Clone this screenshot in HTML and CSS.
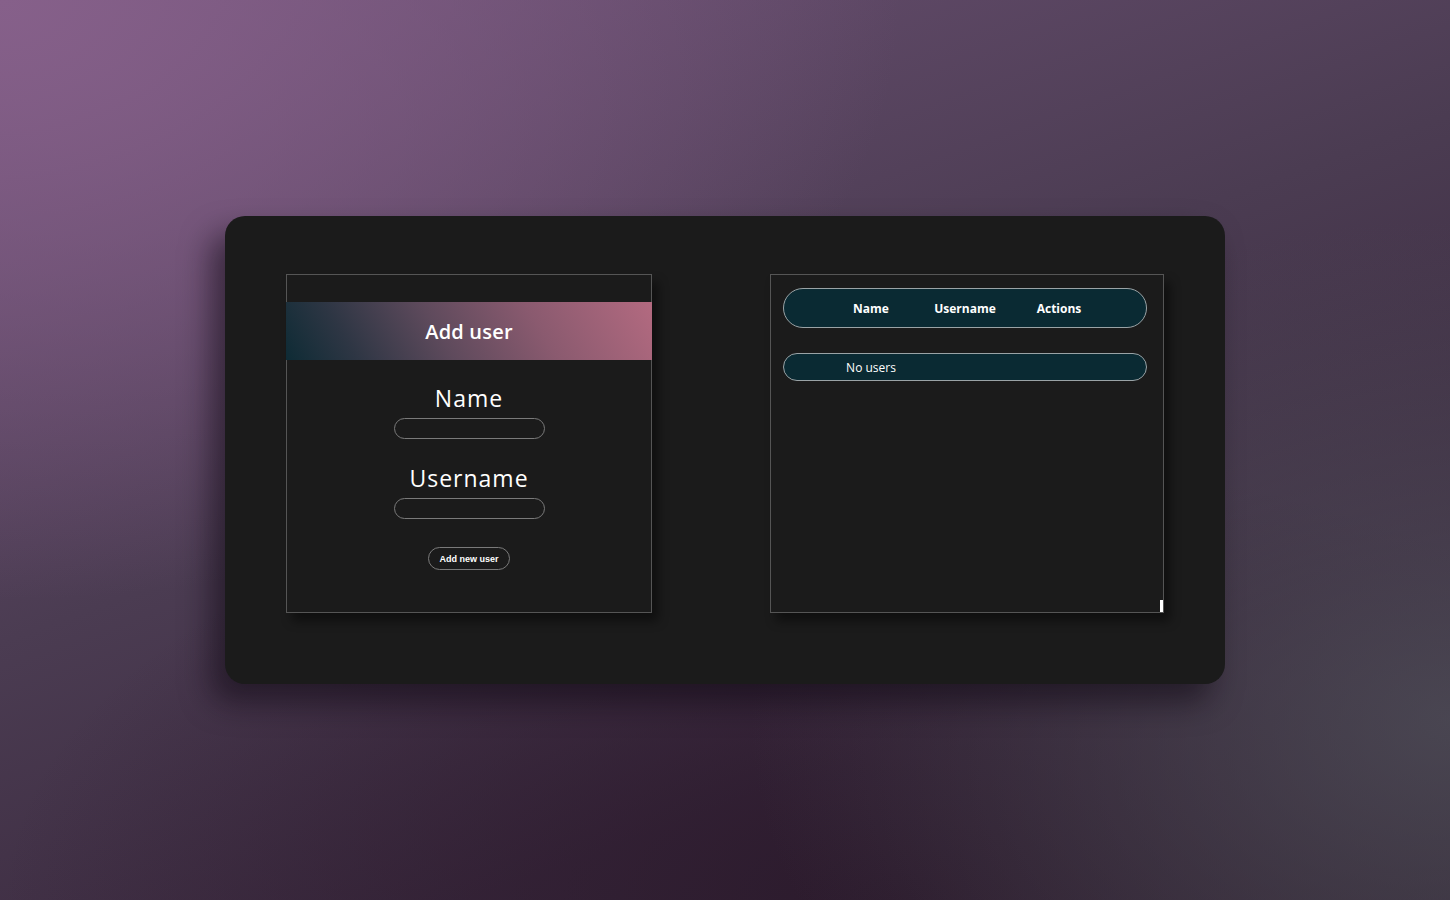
FILE: index.html
```html
<!DOCTYPE html>
<html>
<head>
<meta charset="utf-8">
<link rel="stylesheet" href="styles.css">
</head>
<body>
<main class="card">
  <section class="panel form-panel">
    <h2 class="form-title">Add user</h2>
    <label class="field">
      <span class="field-label">Name</span>
      <input class="field-input" type="text">
    </label>
    <label class="field">
      <span class="field-label">Username</span>
      <input class="field-input" type="text">
    </label>
    <button class="add-btn">Add new user</button>
  </section>
  <section class="panel table-panel">
    <div class="thead">
      <span>Name</span><span>Username</span><span>Actions</span>
    </div>
    <div class="trow">
      <span>No users</span><span></span><span></span>
    </div>
    <div class="handle"></div>
  </section>
</main>
</body>
</html>
```
FILE: styles.css
```css
* { box-sizing: border-box; }
html, body { margin: 0; height: 100%; }
body {
  width: 1450px;
  height: 900px;
  display: flex;
  align-items: center;
  justify-content: center;
  font-family: "Open Sans", "Noto Sans", sans-serif;
  color: #fff;
  background:
    radial-gradient(ellipse 700px 500px at 1450px 720px, rgba(80,80,90,0.75), rgba(80,80,90,0) 100%),
    radial-gradient(ellipse 900px 450px at 900px 900px, rgba(40,22,40,0.8), rgba(40,22,40,0) 100%),
    radial-gradient(ellipse 900px 600px at 0px 0px, #86608a, rgba(134,96,138,0) 100%),
    linear-gradient(160deg, #6e5276 0%, #4b3c52 45%, #3b2a3f 75%, #352a38 100%);
  overflow: hidden;
}
.card {
  width: 1000px;
  height: 468px;
  background: #1b1b1b;
  border-radius: 20px;
  padding: 58px 61px 71px;
  display: flex;
  justify-content: space-between;
  box-shadow: -14px 18px 30px rgba(15,8,18,0.55);
}
.panel {
  height: 339px;
  border: 1.5px solid #555;
  background: #1b1b1b;
  box-shadow: 6px 8px 10px rgba(0,0,0,0.45);
  position: relative;
}
.form-panel {
  width: 366px;
  display: flex;
  flex-direction: column;
  align-items: center;
  padding-top: 27px;
}
.form-title {
  align-self: stretch;
  margin: 0 -1px;
  height: 58px;
  display: flex;
  align-items: center;
  justify-content: center;
  font-size: 20px;
  font-weight: 600;
  letter-spacing: 0.2px;
  background: linear-gradient(60deg, #0e2b35 0%, #2e3644 18%, #5e4a5c 42%, #8a5a6f 68%, #b36a80 100%);
}
.field {
  display: flex;
  flex-direction: column;
  align-items: center;
}
.form-title + .field { margin-top: 24px; }
.field + .field { margin-top: 25px; }
.field-label {
  font-size: 23px;
  line-height: 28px;
  font-weight: 400;
  margin-bottom: 6px;
  letter-spacing: 1px;
}
.field-input {
  width: 151px;
  height: 21px;
  border: 1px solid #7a7a7a;
  border-radius: 11px;
  background: transparent;
  color: #fff;
  outline: none;
}
.add-btn {
  margin-top: 28px;
  width: 82px;
  height: 23px;
  border: 1px solid #7a7a7a;
  border-radius: 12px;
  background: transparent;
  color: #fff;
  font-family: "Liberation Sans", Arial, sans-serif;
  font-weight: 700;
  font-size: 9px;
  padding: 0;
}
.table-panel {
  width: 394px;
  padding: 13px 16px 0 12px;
  display: flex;
  flex-direction: column;
}
.thead, .trow {
  display: grid;
  grid-template-columns: 94px 94px 94px;
  justify-content: center;
  align-items: center;
  background: #0a2a33;
  border: 1px solid #9aa3a6;
  text-align: center;
}
.thead {
  height: 40px;
  border-radius: 20px;
  font-size: 12px;
  font-weight: 700;
}
.trow {
  margin-top: 25px;
  height: 28px;
  border-radius: 14px;
  font-size: 12px;
  font-weight: 400;
}
.handle {
  position: absolute;
  right: 0;
  bottom: 0;
  width: 3px;
  height: 12px;
  background: #fff;
}
```
